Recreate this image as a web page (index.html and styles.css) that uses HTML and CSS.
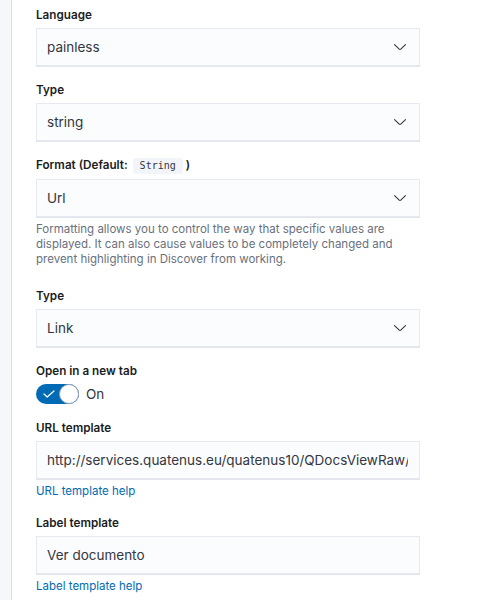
FILE: index.html
```html
<!DOCTYPE html>
<html lang="en">
<head>
<meta charset="utf-8">
<title>Field format</title>
<link rel="stylesheet" href="styles.css">
</head>
<body>
<div class="page">
  <div class="rail"></div>
  <form class="form">
    <div class="row">
      <div class="label">Language</div>
      <div class="control select"><span class="value">painless</span><svg class="chev" viewBox="0 0 16 16" width="16" height="16"><path d="M13.069 5.157L8.384 9.768a.546.546 0 01-.768 0L2.93 5.158a.552.552 0 00-.771 0 .53.53 0 000 .759l4.684 4.61c.641.631 1.672.63 2.312 0l4.684-4.61a.53.53 0 000-.76.552.552 0 00-.771 0z"/></svg></div>
    </div>
    <div class="row">
      <div class="label">Type</div>
      <div class="control select"><span class="value">string</span><svg class="chev" viewBox="0 0 16 16" width="16" height="16"><path d="M13.069 5.157L8.384 9.768a.546.546 0 01-.768 0L2.93 5.158a.552.552 0 00-.771 0 .53.53 0 000 .759l4.684 4.61c.641.631 1.672.63 2.312 0l4.684-4.61a.53.53 0 000-.76.552.552 0 00-.771 0z"/></svg></div>
    </div>
    <div class="row">
      <div class="label">Format (Default: <code class="code">String</code> )</div>
      <div class="control select"><span class="value">Url</span><svg class="chev" viewBox="0 0 16 16" width="16" height="16"><path d="M13.069 5.157L8.384 9.768a.546.546 0 01-.768 0L2.93 5.158a.552.552 0 00-.771 0 .53.53 0 000 .759l4.684 4.61c.641.631 1.672.63 2.312 0l4.684-4.61a.53.53 0 000-.76.552.552 0 00-.771 0z"/></svg></div>
      <div class="help help-gap">Formatting allows you to control the way that specific values are displayed. It can also cause values to be completely changed and prevent highlighting in Discover from working.</div>
    </div>
    <div class="row">
      <div class="label">Type</div>
      <div class="control select"><span class="value">Link</span><svg class="chev" viewBox="0 0 16 16" width="16" height="16"><path d="M13.069 5.157L8.384 9.768a.546.546 0 01-.768 0L2.93 5.158a.552.552 0 00-.771 0 .53.53 0 000 .759l4.684 4.61c.641.631 1.672.63 2.312 0l4.684-4.61a.53.53 0 000-.76.552.552 0 00-.771 0z"/></svg></div>
    </div>
    <div class="row">
      <div class="label">Open in a new tab</div>
      <div class="switch-line">
        <span class="switch">
          <svg class="check" viewBox="0 0 12 8" width="12" height="8"><path d="M1 4l3.2 3L11 1" fill="none" stroke="#fff" stroke-width="1.2" stroke-linecap="round" stroke-linejoin="round"/></svg>
          <span class="knob"></span>
        </span>
        <span class="switch-text">On</span>
      </div>
    </div>
    <div class="row">
      <div class="label">URL template</div>
      <div class="control text"><span class="value">http://services.quatenus.eu/quatenus10/QDocsViewRaw/{{value}}</span></div>
      <div class="help"><a class="link" href="#">URL template help</a></div>
    </div>
    <div class="row">
      <div class="label">Label template</div>
      <div class="control text"><span class="value">Ver documento</span></div>
      <div class="help"><a class="link" href="#">Label template help</a></div>
    </div>
  </form>
</div>
</body>
</html>
```

FILE: styles.css
```css
* { box-sizing: border-box; }
html, body { margin: 0; padding: 0; background: #fff; }
body {
  font-family: Inter, "Noto Sans", "Liberation Sans", sans-serif;
  color: #343741;
}
.page {
  display: flex;
  min-height: 600px;
}
.rail {
  width: 12px;
  flex: none;
  background: #f5f7fa;
  border-right: 1px solid #d9dfe9;
}
.form {
  width: 384px;
  margin: 0 0 0 24px;
  padding-top: 6px;
}
.row + .row { margin-top: 15px; }
.label {
  font-size: 11.7px;
  line-height: 18px;
  font-weight: 600;
  color: #1a1c21;
  margin-bottom: 4px;
  white-space: nowrap;
}
.code {
  font-family: "DejaVu Sans Mono", "Liberation Mono", monospace;
  font-size: 10px;
  font-weight: 400;
  color: #343741;
  background: #f1f4f8;
  padding: 2px 7px 3px;
  border-radius: 3px;
  margin-left: 2px;
}
.control {
  height: 38px;
  display: flex;
  align-items: center;
  background: #fbfcfd;
  border: 1px solid #e6e9f0;
  box-shadow: 0 1px 0 #e1e5ec;
  padding: 0 11px 0 10px;
  font-size: 13.5px;
  overflow: hidden;
}
.value {
  flex: 1;
  min-width: 0;
  white-space: nowrap;
  overflow: hidden;
  color: #343741;
}
.chev {
  flex: none;
  fill: #343741;
}
.help {
  font-size: 11.5px;
  line-height: 15px;
  color: #69707d;
  margin-top: 5px;
}
.help-gap { padding-bottom: 5px; }
.link {
  color: #006bb4;
  text-decoration: none;
}
.switch-line {
  display: flex;
  align-items: center;
  gap: 7px;
  height: 20px;
}
.switch {
  position: relative;
  display: flex;
  align-items: center;
  justify-content: space-between;
  width: 43px;
  height: 20px;
  border-radius: 10px;
  background: #006bb4;
  padding-left: 7px;
}
.check { display: block; }
.knob {
  width: 20px;
  height: 20px;
  border-radius: 50%;
  background: #fff;
  border: 1px solid #98a2b3;
}
.switch-text {
  font-size: 13.5px;
  color: #343741;
}
```
